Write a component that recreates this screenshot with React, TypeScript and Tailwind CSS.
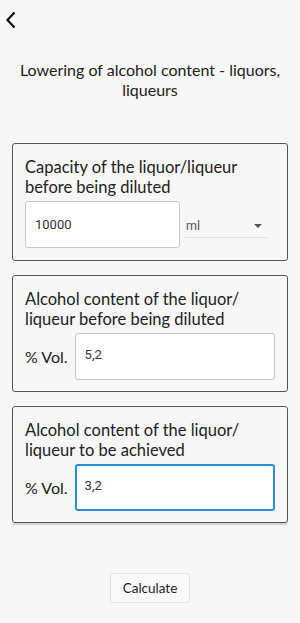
import React from 'react';

function VolInput({ value, focused }: { value: string; focused?: boolean }) {
  return (
    <div className="flex items-center gap-[7px]">
      <span className="text-[16px] text-[#222]">% Vol.</span>
      <div
        className={
          focused
            ? 'flex-1 h-[47px] rounded-[3px] border-2 border-[#2b8fde] bg-white flex items-center pl-[8px]'
            : 'flex-1 h-[47px] rounded-[3px] border border-[#c8c8c8] bg-white flex items-center pl-[9px]'
        }
      >
        <span className="text-[13px] text-[#333] font-['Roboto',sans-serif] -mt-[4px]">{value}</span>
      </div>
    </div>
  );
}

export default function App() {
  return (
    <div className="w-[300px] h-[623px] bg-[#f7f7f7] font-['Lato','Noto_Sans',sans-serif] text-[#222] flex flex-col">
      {/* Header */}
      <div className="h-[40px] flex items-center pl-[5px]">
        <svg width="12" height="18" viewBox="0 0 12 18">
          <path d="M9.5 1.5 L2.5 9 L9.5 16.5" fill="none" stroke="#111" strokeWidth="2.2" />
        </svg>
      </div>
      <h1 className="mt-[20px] px-3 text-center text-[16px] leading-[20px] text-[#222]">
        Lowering of alcohol content - liquors, liqueurs
      </h1>

      <div className="mt-[43px] mx-[12px] flex flex-col gap-[14px]">
        {/* Card 1 */}
        <div className="border border-[#555] rounded-[3px] px-[12px] pt-[13px] pb-[12px]">
          <p className="text-[16.5px] leading-[20px]">Capacity of the liquor/liqueur before being diluted</p>
          <div className="mt-[4px] flex items-start gap-[5px]">
            <div className="w-[155px] h-[47px] rounded-[3px] border border-[#c8c8c8] bg-white flex items-center pl-[9px]">
              <span className="text-[13px] text-[#333] font-['Roboto',sans-serif]">10000</span>
            </div>
            <div className="w-[83px] h-[37px] border-b border-[#e2e2e2] flex items-end justify-between pb-[3px] pl-[1px] pr-[6px]">
              <span className="text-[12.5px] leading-[16px] text-[#555] font-['Roboto',sans-serif]">ml</span>
              <svg width="8" height="4" viewBox="0 0 8 4" className="mb-[6px]">
                <path d="M0 0 L8 0 L4 4 Z" fill="#555" />
              </svg>
            </div>
          </div>
        </div>

        {/* Card 2 */}
        <div className="border border-[#555] rounded-[3px] px-[12px] pt-[13px] pb-[11px]">
          <p className="text-[16.5px] leading-[20px]">Alcohol content of the liquor/ liqueur before being diluted</p>
          <div className="mt-[4px]">
            <VolInput value="5,2" />
          </div>
        </div>

        {/* Card 3 */}
        <div className="border border-[#555] rounded-[3px] px-[12px] pt-[13px] pb-[11px] shadow-[0_2px_1px_rgba(0,0,0,0.15)]">
          <p className="text-[16.5px] leading-[20px]">Alcohol content of the liquor/ liqueur to be achieved</p>
          <div className="mt-[4px]">
            <VolInput value="3,2" focused />
          </div>
        </div>
      </div>

      <div className="mt-[50px] flex justify-center">
        <button className="w-[80px] h-[30px] rounded-[3px] border border-[#e3e3e3] bg-[#fafafa] text-[13.5px] text-[#222]">
          Calculate
        </button>
      </div>
    </div>
  );
}
